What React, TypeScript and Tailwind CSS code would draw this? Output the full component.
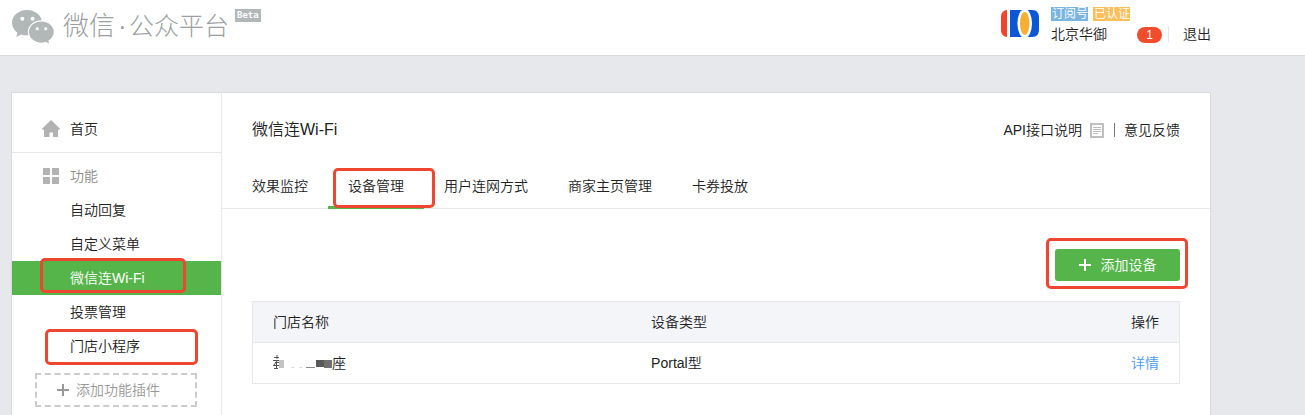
import type { ReactNode } from "react";

function Mark({ className }: { className: string }) {
  return (
    <span
      aria-hidden="true"
      className={`pointer-events-none absolute z-10 rounded-[5px] border-[3px] border-[#ee4630] ${className}`}
    />
  );
}

function WechatLogo() {
  return (
    <svg width="42" height="34" viewBox="0 0 42 34" aria-hidden="true" className="shrink-0">
      <path
        fill="#b2b7b8"
        d="M15 0C6.500 0 0 5.600 0 12.800c0 4.100 2.100 7.500 5.400 9.900L4.300 27l5-2.600c1.800.5 3.600.9 5.700.9C23.400 25.300 30 19.800 30 12.800 30 5.600 23.400 0 15 0Z"
      />
      <path
        fill="#b2b7b8"
        stroke="#fff"
        strokeWidth="1.200"
        d="M29.400 10.900c-7.300 0-13 4.900-13 11.200s5.700 11.200 13 11.200c1.600 0 3.100-.3 4.500-.7l4.200 2.200-1.100-3.700c3-2.200 5.400-5.300 5.400-9 0-6.300-5.900-11.200-13-11.200Z"
      />
      <circle cx="10.300" cy="8.700" r="2" fill="#fff" />
      <circle cx="20.500" cy="8.700" r="2" fill="#fff" />
      <circle cx="25.300" cy="18.700" r="1.600" fill="#fff" />
      <circle cx="33.700" cy="18.700" r="1.600" fill="#fff" />
    </svg>
  );
}

function AccountLogo() {
  return (
    <svg width="38" height="27" viewBox="0 0 38 27" aria-hidden="true" className="shrink-0">
      <path fill="#ef4330" d="M6 0v27C2 26.500 0 24 0 20V7C0 3 2 .5 6 0Z" />
      <path fill="#0b57d6" d="M9 0h22c5 0 7 3 7 8v11c0 5-2 8-7 8H9Z" />
      <ellipse cx="23.700" cy="13.500" rx="7.300" ry="14.500" fill="#fff" />
      <ellipse cx="23.700" cy="13.500" rx="4.700" ry="11.500" fill="#f8ae32" />
    </svg>
  );
}

function NavItem({ label, active, children }: { label: string; active?: boolean; children?: ReactNode }) {
  return (
    <li className="relative">
      <a
        href="#"
        className={`block h-[34px] pl-[58px] leading-[34px] ${active ? "bg-[#56b54a] text-white" : ""}`}
      >
        {label}
      </a>
      {children}
    </li>
  );
}

function Tab({ label, active, children }: { label: string; active?: boolean; children?: ReactNode }) {
  return (
    <li className="relative -mb-px">
      <a
        href="#"
        className={`block h-[45px] px-5 leading-[45px] ${active ? "shadow-[inset_0_-3px_0_#56b54a]" : ""}`}
      >
        {label}
      </a>
      {children}
    </li>
  );
}

function Plus({ size }: { size: number }) {
  return (
    <svg width={size} height={size} viewBox="0 0 12 12" fill="currentColor" aria-hidden="true">
      <path d="M5 0h2v5h5v2H7v5H5V7H0V5h5Z" />
    </svg>
  );
}

export default function App() {
  return (
    <div className="flex min-h-screen flex-col bg-[#e7e8eb] font-['Liberation_Sans','Noto_Sans_CJK_SC',sans-serif] text-sm font-[350] text-[#222]">
      <header className="flex h-14 justify-between border-b border-[#d9dadc] bg-white pr-[94px] pl-3">
        <div className="flex items-start text-[#9b9fa1]">
          <div className="pt-[10px]">
            <WechatLogo />
          </div>
          <h1 className="flex gap-[3px] pt-2 pl-[9px] text-[26px] leading-9 font-light">
            <span>微信</span>
            <span className="w-2 text-center">·</span>
            <span className="text-[25px] leading-9">公众平台</span>
          </h1>
          <span className="mt-[9px] ml-[6px] h-[13px] bg-[#b2b7b8] px-[2px] font-['DejaVu_Sans_Mono',monospace] text-[9px] leading-[13px] font-bold text-white">
            Beta
          </span>
        </div>
        <div className="flex items-start">
          <div className="pt-[10px]">
            <AccountLogo />
          </div>
          <div className="w-[98px] pt-[7px] pl-3">
            <div className="flex gap-[5px] text-xs leading-[14px] whitespace-nowrap text-white">
              <span className="bg-[#7ab5e0] pl-px">订阅号</span>
              <span className="bg-[#f8bf5c] pl-px">已认证</span>
            </div>
            <div className="pt-px leading-6">北京华御</div>
          </div>
          <a
            href="#"
            className="mt-[27px] h-4 w-[25px] rounded-full bg-[#f04d2e] text-center text-xs leading-4 text-white"
          >
            1
          </a>
          <a href="#" className="mt-[26px] ml-[6px] border-l border-[#e7e7eb] pl-[14px] leading-4">
            退出
          </a>
        </div>
      </header>

      <div className="flex flex-1 pt-9 pr-[94px] pl-[11px]">
        <div className="flex flex-1 border border-b-0 border-[#d9dadc] bg-white">
          <nav className="w-[210px] shrink-0 border-r border-[#e7e7eb]">
            <a href="#" className="flex h-[60px] items-center border-b border-[#e7e7eb] pt-3 pl-[30px]">
              <svg width="18" height="17" viewBox="0 0 18 17" fill="#b2b2b2" aria-hidden="true">
                <path d="M9 0 18 8.800l-.8.900H16V17h-5v-4.500H7.500V17H2V9.700H.8L0 8.800Z" />
              </svg>
              <span className="pl-[10px]">首页</span>
            </a>
            <div className="pt-[6px]">
              <h2 className="flex h-[34px] items-center pl-[31px] font-[350] text-[#8d8d8d]">
                <svg width="16" height="16" viewBox="0 0 16 16" fill="#b2b2b2" aria-hidden="true">
                  <path d="M0 0h7v7H0zM9 0h7v7H9zM0 9h7v7H0zM9 9h7v7H9z" />
                </svg>
                <span className="pl-[11px]">功能</span>
              </h2>
              <ul>
                <NavItem label="自动回复" />
                <NavItem label="自定义菜单" />
                <NavItem label="微信连Wi-Fi" active>
                  <Mark className="-top-[3px] left-7 h-[35px] w-[146px]" />
                </NavItem>
                <NavItem label="投票管理" />
                <NavItem label="门店小程序">
                  <Mark className="top-0 left-[33px] h-9 w-[153px]" />
                </NavItem>
              </ul>
              <button
                type="button"
                className="mt-[10px] ml-[23px] flex h-[34px] w-[162px] items-center gap-[7px] border-2 border-dashed border-[#ccc] pl-5 text-[#999]"
              >
                <Plus size={12} />
                添加功能插件
              </button>
            </div>
          </nav>

          <main className="min-w-0 flex-1">
            <div className="flex h-[71px] items-center justify-between px-[30px] pt-[3px]">
              <h2 className="text-base font-[350]">微信连Wi-Fi</h2>
              <div className="flex items-center">
                <a href="#" className="flex items-center gap-2">
                  API接口说明
                  <svg width="14" height="15" viewBox="0 0 14 15" fill="none" stroke="#bfbfbf" aria-hidden="true">
                    <path strokeWidth="2" d="M1 1h12v13H1z" />
                    <path d="M3 4.500h8M3 6.500h8M3 8.500h8M3 10.500h5" />
                  </svg>
                </a>
                <span className="mr-[9px] ml-[10px] h-[14px] w-px bg-[#777]" />
                <a href="#">意见反馈</a>
              </div>
            </div>
            <ul className="flex border-b border-[#e7e7eb] pl-[10px]">
              <Tab label="效果监控" />
              <Tab label="设备管理" active>
                <Mark className="top-1 left-[5px] h-10 w-[102px]" />
              </Tab>
              <Tab label="用户连网方式" />
              <Tab label="商家主页管理" />
              <Tab label="卡券投放" />
            </ul>
            <div className="px-[30px] pt-10">
              <div className="flex justify-end">
                <div className="relative">
                  <button
                    type="button"
                    className="flex h-8 w-[125px] items-center justify-center gap-[10px] rounded-[3px] bg-[#56b54a] text-white"
                  >
                    <Plus size={12} />
                    添加设备
                  </button>
                  <Mark className="-top-[11px] -left-[9px] h-[51px] w-[142px]" />
                </div>
              </div>
              <table className="mt-5 w-full table-fixed border-collapse border border-[#e7e7eb] text-left">
                <thead className="bg-[#f4f5f9]">
                  <tr className="h-[41px] border-b border-[#e7e7eb]">
                    <th className="w-[43%] pl-5 font-[350]">门店名称</th>
                    <th className="font-[350]">设备类型</th>
                    <th className="pr-5 text-right font-[350]">操作</th>
                  </tr>
                </thead>
                <tbody>
                  <tr className="h-[41px]">
                    <td className="pl-5">
                      <span className="flex items-center">
                        <svg width="59" height="16" viewBox="0 0 59 16" aria-hidden="true">
                          <path
                            stroke="#555"
                            fill="none"
                            d="M1 2.500h5M4 0v4M0 5.500h6M2 7.500h4M4 6l-3 4M0 10.500h6M3.500 8v6M1 13.500h4"
                          />
                          <path fill="#c4c4c4" d="M6 5h5v8H6z" />
                          <path fill="#ddd" d="M18 12h3v1h-3zM26 12h3v1h-3z" />
                          <path fill="#888" d="M33 12h9v1h-9z" />
                          <path fill="#595959" d="M43 5h8v7h-8z" />
                          <path fill="#707070" d="M51 5h8v8h-8z" />
                        </svg>
                        座
                      </span>
                    </td>
                    <td>Portal型</td>
                    <td className="pr-5 text-right">
                      <a href="#" className="text-[#459ae9]">
                        详情
                      </a>
                    </td>
                  </tr>
                </tbody>
              </table>
            </div>
          </main>
        </div>
      </div>
    </div>
  );
}
